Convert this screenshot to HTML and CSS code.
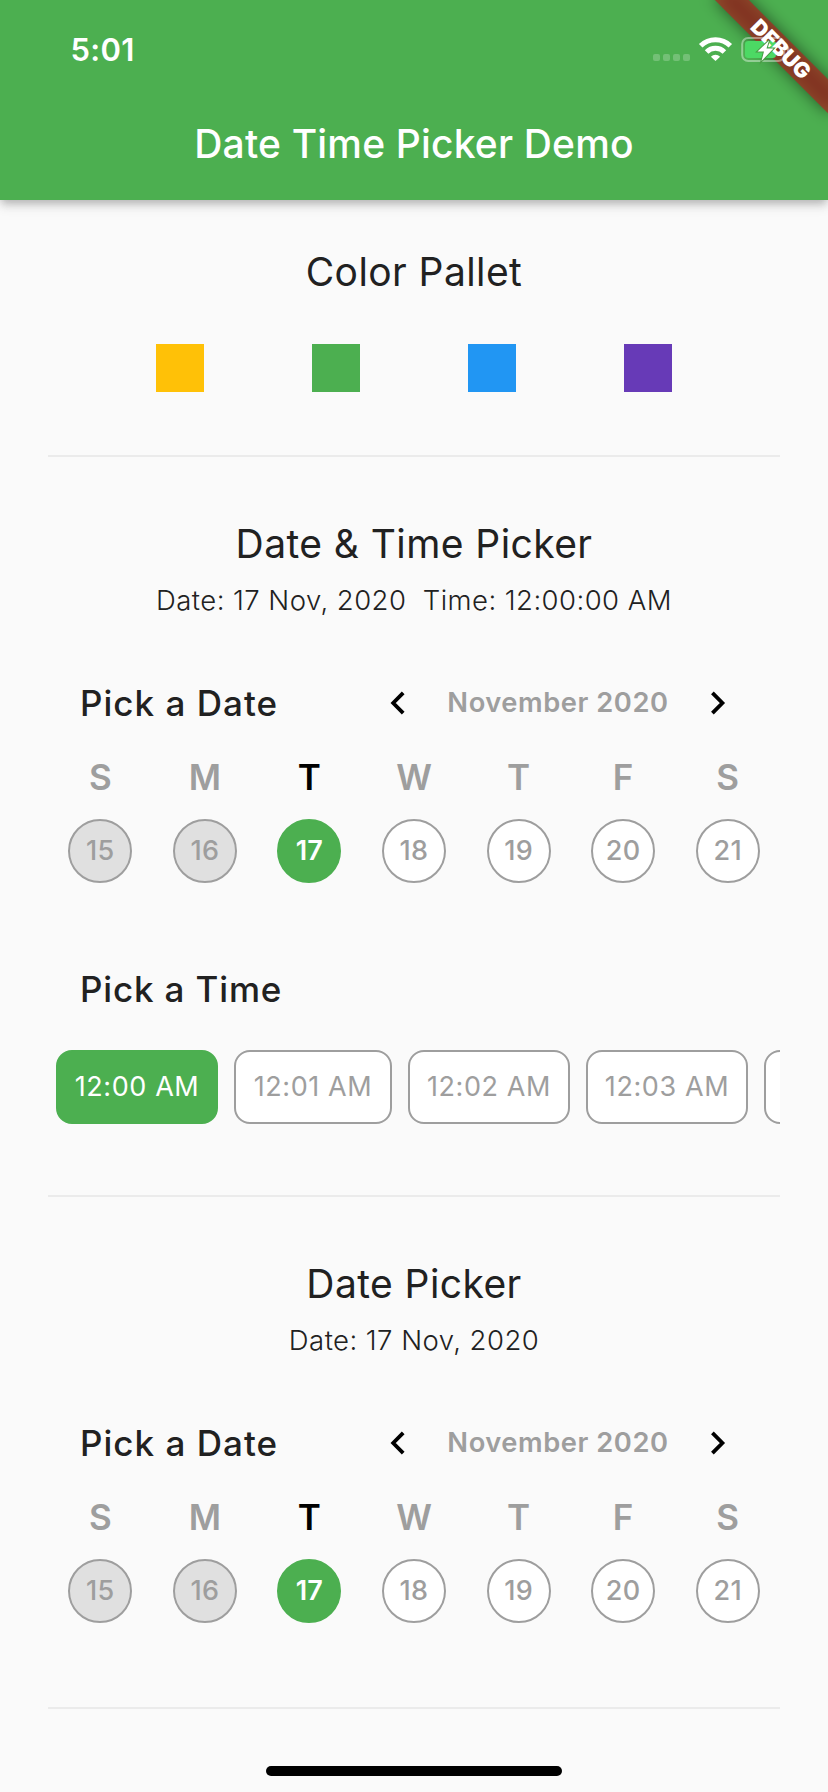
FILE: index.html
```html
<!DOCTYPE html>
<html lang="en">
<head>
<meta charset="utf-8">
<title>Date Time Picker Demo</title>
<link rel="stylesheet" href="styles.css">
</head>
<body>
<header class="app-bar">
  <div class="status-bar">
    <span class="clock">5:01</span>
    <svg class="status-icons" width="140" height="30" viewBox="652 34 140 30">
      <g fill="#fff" fill-opacity=".22">
        <rect x="653" y="54" width="7" height="7" rx="2"/>
        <rect x="663" y="54" width="7" height="7" rx="2"/>
        <rect x="673" y="54" width="7" height="7" rx="2"/>
        <rect x="683" y="54" width="7" height="7" rx="2"/>
      </g>
      <g fill="none" stroke="#fff" stroke-width="5">
        <path d="M700.7 45.8a21.2 21.2 0 0 1 29.6 0"/>
        <path d="M706.6 51.9a12.6 12.6 0 0 1 17.8 0"/>
      </g>
      <path fill="#fff" d="M715.5 61l-4.6-4.3a6.4 6.4 0 0 1 9.2 0z"/>
    </svg>
  </div>
  <h1 class="app-title">Date Time Picker Demo</h1>
</header>

<svg class="banner" width="228" height="140" viewBox="600 0 228 140">
  <defs>
    <filter id="soft" x="-50%" y="-200%" width="200%" height="500%"><feGaussianBlur stdDeviation="7.9"/></filter>
  </defs>
  <g transform="translate(828 0) rotate(45)">
    <rect x="-80" y="56" width="160" height="24" fill="#000" fill-opacity=".5" filter="url(#soft)"/>
    <rect x="-80" y="56" width="160" height="24" fill="#b71c1c" fill-opacity=".63"/>
  </g>
  <rect x="742.2" y="38" width="42" height="23" rx="6" fill="none" stroke="#fff" stroke-opacity=".4" stroke-width="2"/>
  <path d="M787 45.5c3.4 1.2 3.4 7 0 8.4z" fill="#fff" fill-opacity=".4"/>
  <rect x="745" y="41" width="31" height="17" rx="3.2" fill="#4cd964"/>
  <text class="banner-text" transform="translate(828 0) rotate(45)" x="1.4" y="75.6" text-anchor="middle">DEBUG</text>
  <path d="M769 40.5L757.5 51.5h6.5L761.5 61L773.5 48.5h-7z" fill="#fff" stroke="#4a9a45" stroke-width="2" paint-order="stroke"/>
</svg>

<main class="content">
  <section class="palette">
    <h2 class="heading">Color Pallet</h2>
    <div class="swatches">
      <span class="swatch amber"></span><span class="swatch green"></span><span class="swatch blue"></span><span class="swatch purple"></span>
    </div>
  </section>

  <section class="block with-time">
    <h2 class="heading">Date &amp; Time Picker</h2>
    <p class="value">Date: 17 Nov, 2020&nbsp; Time: 12:00:00 AM</p>
    <div class="picker-head">
      <h3 class="label">Pick a Date</h3>
      <svg class="chevron prev" width="16" height="26" viewBox="0 0 16 26"><path d="M13.2 2.9L3.2 13l10 10.1"/></svg>
      <span class="month">November 2020</span>
      <svg class="chevron" width="16" height="26" viewBox="0 0 16 26"><path d="M2.4 2.9L12.4 13l-10 10.1"/></svg>
    </div>
    <div class="week">
      <div class="day past"><span class="name">S</span><span class="num">15</span></div>
      <div class="day past"><span class="name">M</span><span class="num">16</span></div>
      <div class="day selected"><span class="name">T</span><span class="num">17</span></div>
      <div class="day"><span class="name">W</span><span class="num">18</span></div>
      <div class="day"><span class="name">T</span><span class="num">19</span></div>
      <div class="day"><span class="name">F</span><span class="num">20</span></div>
      <div class="day"><span class="name">S</span><span class="num">21</span></div>
    </div>
    <h3 class="label time-label">Pick a Time</h3>
    <div class="times">
      <span class="chip chosen">12:00 AM</span>
      <span class="chip narrow">12:01 AM</span>
      <span class="chip">12:02 AM</span>
      <span class="chip">12:03 AM</span>
      <span class="chip"></span>
    </div>
  </section>

  <section class="block date-only">
    <h2 class="heading">Date Picker</h2>
    <p class="value">Date: 17 Nov, 2020</p>
    <div class="picker-head">
      <h3 class="label">Pick a Date</h3>
      <svg class="chevron prev" width="16" height="26" viewBox="0 0 16 26"><path d="M13.2 2.9L3.2 13l10 10.1"/></svg>
      <span class="month">November 2020</span>
      <svg class="chevron" width="16" height="26" viewBox="0 0 16 26"><path d="M2.4 2.9L12.4 13l-10 10.1"/></svg>
    </div>
    <div class="week">
      <div class="day past"><span class="name">S</span><span class="num">15</span></div>
      <div class="day past"><span class="name">M</span><span class="num">16</span></div>
      <div class="day selected"><span class="name">T</span><span class="num">17</span></div>
      <div class="day"><span class="name">W</span><span class="num">18</span></div>
      <div class="day"><span class="name">T</span><span class="num">19</span></div>
      <div class="day"><span class="name">F</span><span class="num">20</span></div>
      <div class="day"><span class="name">S</span><span class="num">21</span></div>
    </div>
  </section>
</main>
<div class="home-indicator"></div>
</body>
</html>
```
FILE: styles.css
```css
* { box-sizing: border-box; margin: 0; padding: 0; }
html { height: 100%; }
body {
  height: 1792px;
  overflow: hidden;
  position: relative;
  background: #fafafa;
  color: #212121;
  font-family: Inter, "Liberation Sans", sans-serif;
}
.app-bar {
  height: 200px;
  background: #4caf50;
  color: #fff;
  box-shadow: 0 4px 8px -2px rgba(0,0,0,.2), 0 8px 10px rgba(0,0,0,.08), 0 2px 12px rgba(0,0,0,.08);
}
.status-bar {
  height: 100px;
  display: flex;
  justify-content: space-between;
  align-items: center;
  padding: 0 36px 0 70.5px;
}
.clock { font-size: 31px; font-weight: 600; line-height: 40px; letter-spacing: .3px; }
.status-icons { display: block; margin-bottom: 2px; }
.app-title {
  line-height: 88px;
  font-size: 39px;
  font-weight: 500;
  letter-spacing: .18px;
  text-align: center;
}
.banner { position: absolute; top: 0; right: 0; }
.banner-text { font-size: 21.4px; font-weight: 900; fill: #fff; }

.content { padding: 44px 48px 0; }
.heading {
  font-size: 39px;
  font-weight: 400;
  line-height: 56px;
  letter-spacing: .42px;
  text-align: center;
}
.palette { padding-bottom: 63px; }
.swatches { margin-top: 44px; display: flex; gap: 108px; justify-content: center; }
.swatch { width: 48px; height: 48px; }
.amber { background: #ffc107; }
.green { background: #4caf50; }
.blue { background: #2196f3; }
.purple { background: #673ab7; }

.palette, .block { border-bottom: 2px solid #ebebeb; }
.block { padding-top: 59px; }
.with-time { padding-bottom: 71px; }
.date-only { padding-bottom: 84px; }
.value {
  margin-top: 8px;
  font-size: 27.5px;
  font-weight: 300;
  line-height: 41px;
  letter-spacing: .45px;
  text-align: center;
  white-space: nowrap;
}
.picker-head {
  height: 49px;
  margin-top: 57px;
  padding: 0 54px 0 32px;
  display: flex;
  align-items: center;
}
.label { font-size: 35px; font-weight: 500; letter-spacing: 1.02px; line-height: 40px; }
.chevron { fill: none; stroke: #000; stroke-width: 3.8; }
.prev { margin-left: auto; margin-right: 41px; }
.month {
  font-size: 27.3px;
  font-weight: 600;
  letter-spacing: .55px;
  line-height: 40px;
  color: #9e9e9e;
  margin-right: 41.5px;
}
.week { display: grid; grid-template-columns: repeat(7, 1fr); margin-top: 30px; }
.day { display: flex; flex-direction: column; align-items: center; gap: 21px; color: #9e9e9e; }
.name { font-size: 35px; font-weight: 600; line-height: 41px; }
.num {
  width: 64px;
  height: 64px;
  border: 2px solid #9e9e9e;
  border-radius: 50%;
  background: #fff;
  font-size: 27px;
  font-weight: 500;
  line-height: 59px;
  letter-spacing: .3px;
  text-align: center;
}
.past .num { background: #e0e0e0; }
.selected .name { color: #000; }
.selected .num { background: #4caf50; border-color: #4caf50; color: #fff; font-weight: 600; }
.time-label { margin: 86px 0 0 32px; letter-spacing: .85px; }
.times { display: flex; gap: 16px; margin-top: 41px; padding-left: 8px; overflow: hidden; }
.chip {
  flex: none;
  width: 162px;
  height: 74px;
  border: 2px solid #9e9e9e;
  border-radius: 16px;
  background: #fff;
  color: #9e9e9e;
  font-size: 27px;
  line-height: 69px;
  letter-spacing: .6px;
  text-align: center;
}
.narrow { width: 158px; }
.chosen { background: #4caf50; border-color: #4caf50; color: #fff; }
.home-indicator {
  position: absolute;
  left: 266px;
  bottom: 16px;
  width: 296px;
  height: 10px;
  border-radius: 5px;
  background: #000;
}
```
